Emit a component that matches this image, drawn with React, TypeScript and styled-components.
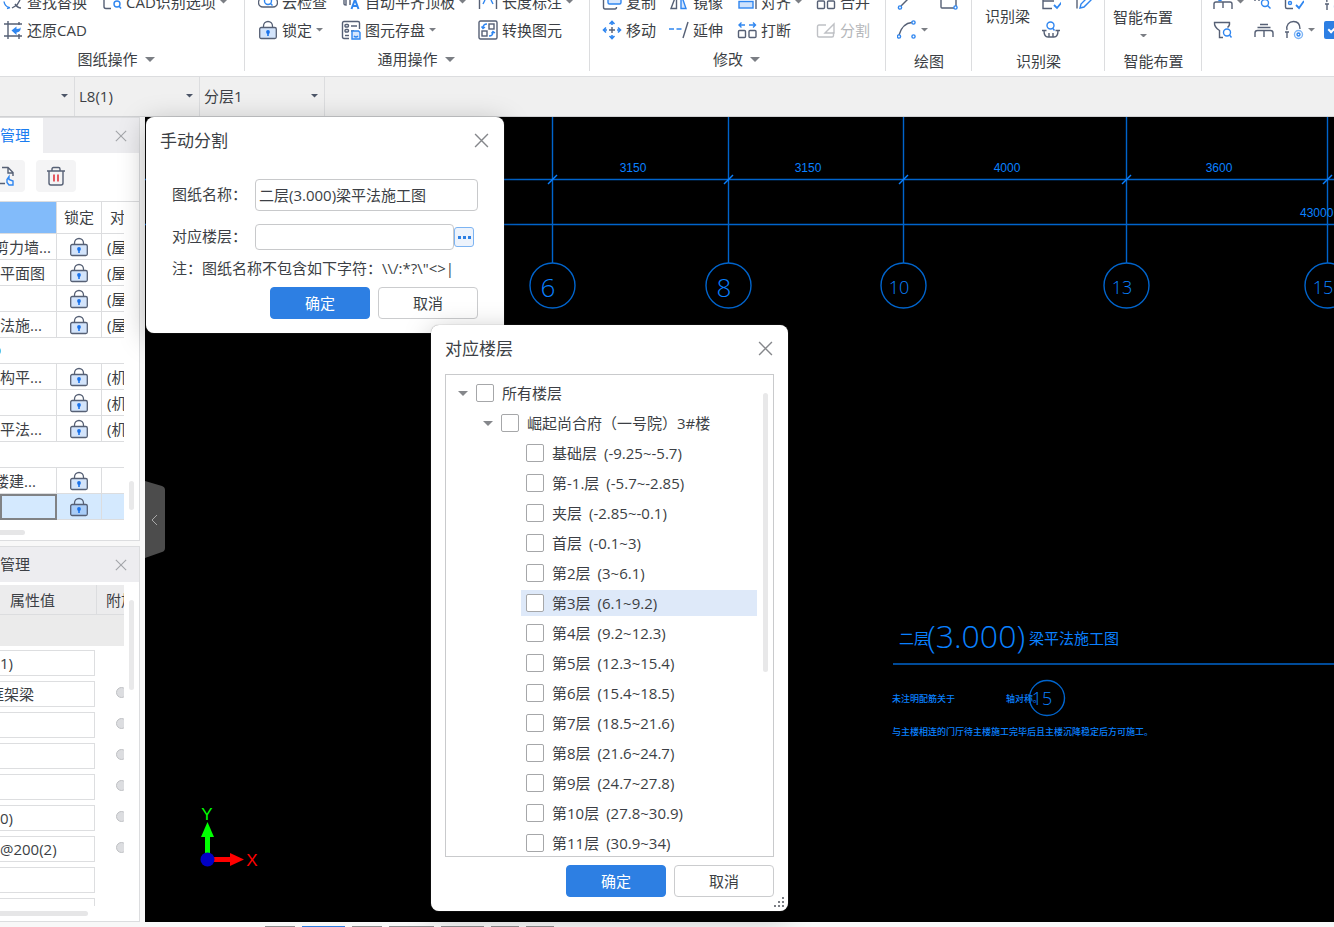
import React from 'react';
import styled, { createGlobalStyle, css } from 'styled-components';

const INK = '#3c3f45';
const SLATE = '#566075';
const BLUE = '#2d7fe3';
const LINE = '#dcdddf';
const CAD = '#0a80ff';

const GlobalStyle = createGlobalStyle`
  *, *::before, *::after { box-sizing: border-box; }
  html, body, #root { height: 100%; }
  body {
    margin: 0;
    overflow: hidden;
    font: 15px/20px "Open Sans", "Noto Sans", "Noto Sans CJK SC", sans-serif;
    color: ${INK};
    background: #f0f0f0;
  }
  button, input, select { font: inherit; color: inherit; margin: 0; }
  button { padding: 0; border: 0; background: none; cursor: pointer; }
  svg { display: block; flex: none; }
`;

/* ---------- shell ---------- */

const Shell = styled.div`
  display: flex;
  flex-direction: column;
  height: 100vh;
  overflow: hidden;
`;

const Workspace = styled.main`
  position: relative;
  display: flex;
  flex: 1;
  min-height: 0;
`;

const StatusBar = styled.footer`
  display: flex;
  align-items: flex-end;
  gap: 7px;
  height: 5px;
  padding-left: 265px;
  background: #f8f8f8;
`;

const StatusTab = styled.span<{ $w: number; $active?: boolean }>`
  width: ${p => p.$w}px;
  height: 1px;
  background: ${p => (p.$active ? BLUE : '#8f9092')};
`;

/* ---------- ribbon ---------- */

const Ribbon = styled.header`
  display: flex;
  flex: none;
  height: 77px;
  overflow: hidden;
  background: #fff;
  border-bottom: 1px solid ${LINE};
`;

const Group = styled.section<{ $w?: number; $bleed?: boolean }>`
  position: relative;
  display: flex;
  flex-direction: column;
  justify-content: flex-end;
  flex: ${p => (p.$w ? `0 0 ${p.$w}px` : '1')};
  height: 76px;
  white-space: nowrap;
  ${p => p.$bleed && css`margin-left: -10px; padding-left: 10px;`}
  &:not(:last-child)::after {
    content: '';
    position: absolute;
    right: 0;
    top: 0;
    width: 1px;
    height: 71px;
    background: ${LINE};
  }
`;

const GroupTitle = styled.div<{ $menu?: boolean; $bleed?: boolean }>`
  display: flex;
  flex: none;
  justify-content: center;
  align-items: center;
  gap: 7px;
  height: 32px;
  ${p => (p.$menu ? 'padding: 0 3px 2px 0;' : 'padding-top: 2px;')}
  ${p => p.$bleed && 'margin-left: -10px;'}
`;

const Commands = styled.div<{ $cols: string; $pad: number }>`
  display: grid;
  grid-template-columns: ${p => p.$cols};
  grid-auto-rows: 28px;
  padding-left: ${p => p.$pad}px;
`;

const Command = styled.button`
  display: flex;
  align-items: center;
  gap: 4px;
  &:disabled { color: #b4b6ba; }
`;

const Split = styled.div`
  display: flex;
  height: 56px;
`;

const BigCommand = styled.button`
  display: flex;
  flex-direction: column;
  align-items: center;
  justify-content: flex-end;
  gap: 7px;
  height: 56px;
  padding: 0 8px 7px;
`;

const BigLabel = styled.span`
  padding: 0 3px 11px 5px;
`;

const BlueCheck = styled.input`
  appearance: none;
  align-self: center;
  width: 18px;
  height: 18px;
  margin: 0;
  border-radius: 2px;
  background: ${BLUE};
  position: relative;
  &::after {
    content: '';
    position: absolute;
    left: 6px;
    top: 3px;
    width: 5px;
    height: 9px;
    border: solid #fff;
    border-width: 0 2px 2px 0;
    transform: rotate(45deg);
  }
`;

/* ---------- selector bar ---------- */

const SelectorBar = styled.nav`
  display: flex;
  flex: none;
  height: 40px;
  background: #f0f0f0;
  border-bottom: 1px solid #d0d1d3;
`;

const Selector = styled.div<{ $w: number }>`
  display: flex;
  align-items: center;
  width: ${p => p.$w}px;
  padding: 0 6px 1px 4px;
  border-right: 1px solid ${LINE};
  select {
    flex: 1;
    min-width: 0;
    appearance: none;
    padding: 0;
    border: 0;
    background: none;
    outline: none;
  }
`;

/* ---------- side panels ---------- */

const Side = styled.aside`
  display: flex;
  flex: none;
  flex-direction: column;
  gap: 5px;
  width: 145px;
  background: #f8f8f8;
`;

const Panel = styled.section<{ $h?: number }>`
  display: flex;
  flex-direction: column;
  flex: ${p => (p.$h ? `0 0 ${p.$h}px` : '1')};
  min-height: 0;
  width: 140px;
  overflow: hidden;
  background: #fff;
  border: solid ${LINE};
  border-width: 1px 1px 1px 0;
`;

const PanelHead = styled.div`
  display: flex;
  flex: none;
  align-items: center;
  justify-content: space-between;
  height: 35px;
  padding-right: 12px;
  background: #ededf0;
`;

const PanelTab = styled.span<{ $active?: boolean }>`
  width: 43px;
  line-height: 35px;
  ${p => p.$active && css`background: #fff; color: #1a7cf0;`}
`;

const PanelTools = styled.div`
  display: flex;
  gap: 11px;
  flex: none;
  height: 49px;
  padding-top: 7px;
  margin-left: -15px;
  border-bottom: 1px solid ${LINE};
`;

const ToolButton = styled.button`
  display: grid;
  place-items: center;
  width: 40px;
  height: 32px;
  border-radius: 4px;
  background: #f4f4f5;
`;

const PanelBody = styled.div`
  display: flex;
  flex: 1;
  min-height: 0;
`;

const Clip = styled.div`
  width: 124px;
  overflow: hidden;
`;

const VTrack = styled.div<{ $top: number; $h: number }>`
  flex: 1;
  padding: ${p => p.$top}px 0 0 5px;
  &::before {
    content: '';
    display: block;
    width: 5px;
    height: ${p => p.$h}px;
    border-radius: 3px;
    background: #e9e9ea;
  }
`;

const HTrack = styled.div<{ $w: number; $h: number }>`
  display: flex;
  align-items: center;
  flex: none;
  height: ${p => p.$h}px;
  &::before {
    content: '';
    width: ${p => p.$w}px;
    height: 5px;
    border-radius: 0 3px 3px 0;
    background: #e6e6e7;
  }
`;

const DrawingTable = styled.table`
  width: 160px;
  table-layout: fixed;
  border-collapse: separate;
  border-spacing: 0;
  th, td {
    height: 26px;
    padding: 0;
    overflow: hidden;
    font-weight: 400;
    text-align: left;
    white-space: nowrap;
    line-height: 20px;
    border: solid ${LINE};
    border-width: 0 1px 1px 0;
  }
  th { height: 32px; padding-bottom: 2px; text-align: center; }
  th:first-child { background: #82bbfa; }
  th:last-child { text-align: left; padding-left: 8px; }
  td:nth-child(2) svg { margin: 0 auto; }
  td:nth-child(3) { padding-left: 5px; }
`;

const DrawingRow = styled.tr<{ $selected?: boolean }>`
  ${p => p.$selected && css`
    td { background: #d4e9fe; }
    td:first-child { border: 2px solid #808285; }
  `}
`;

const NameCell = styled.td<{ $scrolled?: boolean }>`
  text-indent: ${p => (p.$scrolled ? -6 : 0)}px;
`;

const PropTable = styled.table`
  width: 160px;
  margin-top: 3px;
  table-layout: fixed;
  border-spacing: 0;
  th, td { padding: 0; font-weight: 400; text-align: left; }
  th {
    height: 30px;
    background: #ececed;
    border-bottom: 1px solid ${LINE};
    white-space: nowrap;
  }
  th:first-child { padding-left: 10px; border-right: 1px solid ${LINE}; }
  th:last-child { padding-left: 9px; }
  td { height: 31px; }
`;

const PropGroupRow = styled.tr`
  td { height: 31px; background: #ebebeb; }
`;

const PropInput = styled.input<{ $shift?: boolean }>`
  display: block;
  width: 95px;
  height: 26px;
  margin-top: 2px !important;
  padding: 0;
  border: 1px solid #dddee0;
  border-left: 0;
  outline: none;
  text-indent: ${p => (p.$shift ? -11 : 0)}px;
`;

const Dot = styled.input`
  appearance: none;
  display: block;
  width: 11px;
  height: 11px;
  margin-left: 19px !important;
  border: 1px solid #bfc1c4;
  border-radius: 50%;
  background: #dcdde0;
`;

/* ---------- drawing area ---------- */

const Stage = styled.section`
  position: relative;
  flex: 1;
  min-width: 0;
  background: #000;
`;

const Drawing = styled.svg`
  width: 100%;
  height: 100%;
  .dim { font: 12px "Liberation Sans", sans-serif; }
  .axis { font: 300 26px "Open Sans", sans-serif; }
  .axis2 { font: 300 18px "Open Sans", sans-serif; }
  .head { font: 400 15px "Noto Sans CJK SC", sans-serif; }
  .level { font: 300 32px "Open Sans", sans-serif; }
  .note { font: 500 9px "Noto Sans CJK SC", sans-serif; }
  .ucs { font: 17px "Liberation Sans", sans-serif; }
`;

const Collapse = styled.button`
  position: absolute;
  left: 0;
  top: 364px;
`;

/* ---------- dialogs ---------- */

const Dialog = styled.section<{ $x: number; $y: number; $w: number }>`
  position: absolute;
  left: ${p => p.$x}px;
  top: ${p => p.$y}px;
  width: ${p => p.$w}px;
  padding: 0 14px 14px;
  border-radius: 8px;
  background: #fff;
  box-shadow: 0 0 1px #777, 0 6px 28px rgba(0, 0, 0, 0.26);
`;

const DialogHead = styled.div`
  display: flex;
  align-items: center;
  justify-content: space-between;
  height: 47px;
  margin-bottom: 2px;
  padding-right: 1px;
  h2 { margin: 0; font-size: 17px; font-weight: 400; line-height: 24px; }
`;

const Form = styled.form`
  display: flex;
  flex-direction: column;
  padding: 13px 12px 0;
`;

const Field = styled.div<{ $gap?: boolean }>`
  display: flex;
  align-items: center;
  margin-bottom: ${p => (p.$gap ? 13 : 8)}px;
  label { flex: 0 0 83px; padding-bottom: 2px; }
`;

const TextBox = styled.input<{ $h: number }>`
  flex: 1;
  min-width: 0;
  height: ${p => p.$h}px;
  padding: 0 3px 1px;
  border: 1px solid #c8c9cb;
  border-radius: 4px;
  outline: none;
`;

const MoreButton = styled.button`
  display: grid;
  place-items: center;
  width: 20px;
  height: 20px;
  margin-right: 4px;
  border: 1px solid #7db4f2;
  border-radius: 3px;
  background: #edf3fc;
`;

const Note = styled.p`
  margin: 0 0 8px;
  line-height: 21px;
  white-space: nowrap;
`;

const Actions = styled.div`
  display: flex;
  justify-content: flex-end;
  gap: 8px;
`;

const Action = styled.button<{ $primary?: boolean }>`
  width: 100px;
  height: 32px;
  border-radius: 4px;
  border: 1px solid ${p => (p.$primary ? BLUE : '#cbccce')};
  background: ${p => (p.$primary ? BLUE : '#fff')};
  color: ${p => (p.$primary ? '#fff' : INK)};
`;

const Tree = styled.div`
  display: flex;
  height: 483px;
  margin-bottom: 8px;
  border: 1px solid #c9cacc;
  overflow: hidden;
`;

const TreeList = styled.ul`
  flex: 1;
  margin: 0;
  padding: 3px 0 0;
  list-style: none;
`;

const TreeRow = styled.li<{ $level: number }>`
  display: flex;
  align-items: center;
  height: 30px;
  padding-left: ${p => p.$level * 25}px;
`;

const Twisty = styled.button`
  display: flex;
  justify-content: flex-end;
  width: 25px;
  padding-right: 3px;
`;

const TreeLabel = styled.label<{ $hot?: boolean }>`
  display: flex;
  flex: 1;
  align-items: center;
  height: 26px;
  padding-left: 5px;
  white-space: nowrap;
  background: ${p => (p.$hot ? '#dee9f9' : 'transparent')};
`;

const Range = styled.span`
  margin-left: 7px;
`;

const Check = styled.input`
  appearance: none;
  flex: none;
  width: 18px;
  height: 18px;
  margin-right: 8px !important;
  border: 1px solid #a6a7a9;
  border-radius: 2px;
  background: #fff;
`;

const TreeTrack = styled.div`
  width: 16px;
  padding: 18px 0 0 6px;
  &::before {
    content: '';
    display: block;
    width: 5px;
    height: 279px;
    border-radius: 3px;
    background: #e8e8e9;
  }
`;

const Grip = styled.svg`
  position: absolute;
  right: 3px;
  bottom: 3px;
`;

/* ---------- icons ---------- */

const Caret = ({ size = 8, color = '#7b7e84' }: { size?: number; color?: string }) => (
  <svg width={size} height={size / 2} viewBox="0 0 8 4" aria-hidden="true">
    <path d="M0 0h8L4 4z" fill={color} />
  </svg>
);

const Close = ({ size, color }: { size: number; color: string }) => (
  <svg width={size} height={size} viewBox="0 0 14 14" stroke={color} strokeWidth="1.3" aria-hidden="true">
    <path d="M1 1l12 12M13 1L1 13" />
  </svg>
);

const Lock = ({ tone = '#d3e4fb' }: { tone?: string }) => (
  <svg width="20" height="20" viewBox="0 0 20 20" fill="none" stroke={SLATE} strokeWidth="1.3" aria-hidden="true">
    <path d="M5.500 7.500V6a4.500 4.500 0 0 1 9 0v1.500" />
    <rect x="1.700" y="7.500" width="16.600" height="11" rx="1.500" fill={tone} />
    <circle cx="10" cy="12" r="1.900" fill="#1a72ea" stroke="none" />
    <path d="M10 12v4" stroke="#1a72ea" strokeWidth="1.600" />
  </svg>
);

const B = '#2f86f0';

const glyphs: Record<string, React.ReactNode> = {
  findReplace: (
    <>
      <path d="M1 9.500c.5 3 2 5 5 6M4 16.500l3-1" stroke={B} />
      <path d="M17 8l-3 5-5 3M12 12c2 3 4 4 6 4" />
    </>
  ),
  restore: (
    <>
      <path d="M5 1v18M1 4h18M1 16h18M16 2v3M16 14v5" />
      <path d="M8.500 10.500l5-4v2.500c3 0 4-1 4-2 .5 4-1 5-4 5.500V15z" fill={B} stroke="none" />
    </>
  ),
  cadOption: (
    <>
      <path d="M2 2v12.500q0 2 2 2h5" />
      <circle cx="15" cy="12" r="3" stroke={B} />
      <path d="M17 14l2 2.500" stroke={B} />
    </>
  ),
  cloud: (
    <>
      <path d="M5 15a4.500 4.500 0 0 1 0-9M15 6a4.500 4.500 0 0 1 0 9H5" />
      <circle cx="10" cy="9" r="3.500" stroke={B} />
      <path d="M12.500 11.500l2 2" stroke={B} />
    </>
  ),
  align: (
    <>
      <path d="M3 4v8q0 1 2 1V4M9 4v9" />
      <path d="M10.500 17L14 7.500l3.500 9.500M12 14h4" stroke={B} strokeWidth="2" />
    </>
  ),
  dimension: (
    <>
      <path d="M1.500 4v13M18.500 4v13" />
      <path d="M5 12l2-4M15 12l-2-4" stroke={B} />
    </>
  ),
  store: (
    <>
      <path d="M8 18.500H3q-1.500 0-1.500-1.500V3Q1.500 1.500 3 1.500h14Q18.500 1.500 18.500 3v6M10 6h6M10 11h3" />
      <rect x="4" y="4.500" width="3.500" height="2.500" rx="1" />
      <rect x="4" y="9.500" width="3.500" height="2.500" rx="1" />
      <path d="M4 15.500h4" />
      <path d="M11 11h6.500l1.500 1.500V19h-8z" stroke={B} fill="#d7e7fd" />
      <path d="M13 16q2 2 4 0" stroke={B} />
    </>
  ),
  convert: (
    <>
      <rect x="1" y="1" width="18" height="18" rx="1.500" />
      <rect x="11" y="4" width="5" height="5" />
      <rect x="4" y="11" width="5" height="5" />
      <path d="M9 4q-4 0-4 4M3.500 6.500L5 8.500l2-1.500M11 16q4 0 4-4M13.500 13.500L15 11.500l2 1.500" stroke={B} />
    </>
  ),
  copy: (
    <>
      <path d="M5 6H3q-1.500 0-1.500 1.500V15q0 2 1.500 2h10q1.500 0 1.500-2" />
      <rect x="6" y="2" width="13" height="10" rx="1.500" stroke={B} fill="#d7e7fd" />
    </>
  ),
  move: (
    <>
      <path d="M10 7v6M7 10h6" />
      <path d="M10 1.500v3.500M10 15v3.500M1.500 10H5M15 10h3.500M7.500 4L10 1.500 12.500 4M7.500 16l2.500 2.500 2.500-2.500M4 7.500L1.500 10 4 12.500M16 7.500l2.500 2.500-2.500 2.500" stroke={B} strokeWidth="1.600" />
    </>
  ),
  mirror: (
    <>
      <path d="M7.500 2v14.500H2z" />
      <path d="M12 2v14.500h5z" stroke={B} fill="#d7e7fd" />
    </>
  ),
  extend: (
    <>
      <path d="M0 9h5M7.500 9h5" stroke={B} />
      <path d="M19 2l-5 16" />
    </>
  ),
  alignTo: (
    <>
      <rect x="2" y="9.500" width="14" height="6.500" stroke={B} fill="#cfe2fc" />
      <path d="M19 1v16M2 5h12" />
    </>
  ),
  breakApart: (
    <>
      <rect x="1.500" y="10.500" width="7" height="7" rx="1" />
      <rect x="12" y="10.500" width="7" height="7" rx="1" />
      <path d="M8 5H2M4.500 2.500L2 5l2.500 2.500M12 5h6.500M16 2.500L18.500 5 16 7.500" stroke={B} />
    </>
  ),
  merge: (
    <>
      <rect x="1.500" y="9" width="7" height="7.500" rx="1" />
      <rect x="11.500" y="9" width="7" height="7.500" rx="1" />
      <path d="M1.500 5h17" />
    </>
  ),
  cut: (
    <g stroke="#bfc1c5">
      <path d="M10 5H3Q1.500 5 1.500 6.500v9Q1.500 17 3 17h13q1.500 0 1.500-1.500V12" />
      <path d="M9 13l9-9v9zM9 13h4" />
    </g>
  ),
  line: (
    <>
      <path d="M4 14L18 0" />
      <circle cx="3" cy="15.500" r="1.600" stroke={B} fill="#fff" />
    </>
  ),
  rect: (
    <>
      <path d="M2 2v13q0 1 1 1h12M17 2v12" />
      <circle cx="16.500" cy="15.500" r="1.600" stroke={B} fill="#fff" />
    </>
  ),
  arc: (
    <>
      <path d="M2 15C4 8 8 3 15 2.500" />
      <g stroke={B} fill="#fff">
        <circle cx="2" cy="16.500" r="1.600" />
        <circle cx="16.500" cy="2.500" r="1.600" />
        <circle cx="16.500" cy="16.500" r="1.600" />
      </g>
    </>
  ),
  listCheck: (
    <>
      <path d="M2 3v13.500h9M2 9h11" />
      <path d="M13 13l3 3 5-6" stroke={B} strokeWidth="1.800" />
    </>
  ),
  edit: (
    <>
      <path d="M3 3v13.500" />
      <path d="M6 16l1-4 9-9 3 3-9 9z" stroke={B} />
    </>
  ),
  beamSearch: (
    <>
      <path d="M1 10.500h4.500M14.500 10.500H19M3 10.500c0 4 1 6.500 4 6.500h6c3 0 4-2.500 4-6.500M8 13v4M12 13v4" />
      <circle cx="9.500" cy="5.500" r="3.500" stroke={B} />
      <path d="M11.500 8l2 2.500" stroke={B} />
    </>
  ),
  support: (
    <>
      <path d="M1 17v-5q0-2 2-2h14q2 0 2 2v5M10 10v6M5 6h10" />
      <circle cx="7" cy="7" r="1.500" stroke={B} />
    </>
  ),
  quoteSearch: (
    <>
      <path d="M1 5v4M5 5v4" />
      <circle cx="11" cy="11" r="3.500" stroke={B} />
      <path d="M13.500 13.500l3 3" stroke={B} />
    </>
  ),
  pinCheck: (
    <>
      <path d="M1.500 2v13q0 1.500 1.500 1.500h6" />
      <circle cx="6" cy="11" r="1.500" stroke={B} />
      <path d="M12 13l3 3 5-7" stroke={B} strokeWidth="1.800" />
    </>
  ),
  filter: (
    <>
      <path d="M10 17.500H6.500V10.500Q1 7 1.500 2.500h15q.5 3-2 5" />
      <circle cx="14" cy="12.500" r="3.500" stroke={B} />
      <path d="M16.500 15l2 2.500" stroke={B} />
    </>
  ),
  table: <path d="M1 17v-4q0-2.500 2.500-2.500h13q2.500 0 2.500 2.500v4M10 10.500v6.500M3.500 7.500h13M6 4.500h8" />,
  hook: (
    <>
      <path d="M3 18v-6M1 12h4M3 10C2 5 5 1.500 9.500 1.500S16 4 16 9" />
      <circle cx="14.500" cy="14.500" r="4" stroke="#7db4f5" />
      <circle cx="14.500" cy="14.500" r="1.500" stroke={B} />
    </>
  ),
  trash: (
    <>
      <path d="M1 5h18M6 5V3q0-1.500 1.500-1.500h5Q14 1.500 14 3v2M3 5v12q0 2 2 2h10q2 0 2-2V5" />
      <path d="M8 8.500v7M12 8.500v7" stroke="#e0343c" strokeWidth="1.600" />
    </>
  ),
  sheet: (
    <>
      <path d="M7 1.500h6l5 5V10M13 1.500V7h5M2 17.500h8" />
      <path d="M1 3l3 3M12 13.500v3l2 2.500h4v-4l-4-1.500v-3z" stroke={B} />
    </>
  ),
};

const Icon = ({ name }: { name: string }) => (
  <svg width="20" height="20" viewBox="0 0 20 20" fill="none" stroke={SLATE} strokeWidth="1.400" aria-hidden="true">
    {glyphs[name]}
  </svg>
);

const Cmd = ({ icon, text, menu, disabled }: { icon: string; text?: string; menu?: boolean; disabled?: boolean }) => (
  <Command type="button" disabled={disabled} aria-label={text ?? icon}>
    {icon === 'lock' ? <Lock /> : <Icon name={icon} />}
    {text}
    {menu && <Caret size={7} />}
  </Command>
);

/* ---------- data ---------- */

type Sheet = { name?: string; scrolled?: boolean; note?: string; group?: boolean; selected?: boolean; dot?: boolean };

const sheets: Sheet[] = [
  { name: '剪力墙...', scrolled: true, note: '(屋' },
  { name: '平面图', note: '(屋' },
  { note: '(屋' },
  { name: '法施...', note: '(屋' },
  { group: true, dot: true },
  { name: '构平...', note: '(机' },
  { note: '(机' },
  { name: '平法...', note: '(机' },
  { group: true },
  { name: '楼建...', scrolled: true },
  { selected: true },
];

const props = [
  { value: '1)', radio: false },
  { value: '框架梁', shift: true, radio: true },
  { value: '', radio: true },
  { value: '', radio: true },
  { value: '', radio: true },
  { value: '0)', radio: true },
  { value: '@200(2)', radio: true },
  { value: '', radio: false },
  { value: '', radio: false },
];

type Floor = { name: string; range?: string; level: number; hot?: boolean };

const floors: Floor[] = [
  { name: '所有楼层', level: 0 },
  { name: '崛起尚合府（一号院）3#楼', level: 1 },
  { name: '基础层', range: '(-9.25~-5.7)', level: 2 },
  { name: '第-1.层', range: '(-5.7~-2.85)', level: 2 },
  { name: '夹层', range: '(-2.85~-0.1)', level: 2 },
  { name: '首层', range: '(-0.1~3)', level: 2 },
  { name: '第2层', range: '(3~6.1)', level: 2 },
  { name: '第3层', range: '(6.1~9.2)', level: 2, hot: true },
  { name: '第4层', range: '(9.2~12.3)', level: 2 },
  { name: '第5层', range: '(12.3~15.4)', level: 2 },
  { name: '第6层', range: '(15.4~18.5)', level: 2 },
  { name: '第7层', range: '(18.5~21.6)', level: 2 },
  { name: '第8层', range: '(21.6~24.7)', level: 2 },
  { name: '第9层', range: '(24.7~27.8)', level: 2 },
  { name: '第10层', range: '(27.8~30.9)', level: 2 },
  { name: '第11层', range: '(30.9~34)', level: 2 },
];

const axes = [
  { x: 407, label: '6', big: true },
  { x: 583, label: '8', big: true },
  { x: 758, label: '10' },
  { x: 981, label: '13' },
  { x: 1182, label: '15' },
];

const spans = [
  { x: 488, text: '3150' },
  { x: 663, text: '3150' },
  { x: 862, text: '4000' },
  { x: 1074, text: '3600' },
];

/* ---------- sections ---------- */

const TopRibbon = () => (
  <Ribbon>
    <Group $w={255} $bleed>
      <Commands $cols="99px auto" $pad={3}>
        <Cmd icon="findReplace" text="查找替换" />
        <Cmd icon="cadOption" text="CAD识别选项" menu />
        <Cmd icon="restore" text="还原CAD" />
      </Commands>
      <GroupTitle $menu $bleed>图纸操作 <Caret size={10} /></GroupTitle>
    </Group>
    <Group $w={345}>
      <Commands $cols="83px 137px auto" $pad={13}>
        <Cmd icon="cloud" text="云检查" />
        <Cmd icon="align" text="自动平齐顶板" menu />
        <Cmd icon="dimension" text="长度标注" menu />
        <Cmd icon="lock" text="锁定" menu />
        <Cmd icon="store" text="图元存盘" menu />
        <Cmd icon="convert" text="转换图元" />
      </Commands>
      <GroupTitle $menu>通用操作 <Caret size={10} /></GroupTitle>
    </Group>
    <Group $w={296}>
      <Commands $cols="67px 68px 79px auto" $pad={12}>
        <Cmd icon="copy" text="复制" />
        <Cmd icon="mirror" text="镜像" />
        <Cmd icon="alignTo" text="对齐" menu />
        <Cmd icon="merge" text="合并" />
        <Cmd icon="move" text="移动" />
        <Cmd icon="extend" text="延伸" />
        <Cmd icon="breakApart" text="打断" />
        <Cmd icon="cut" text="分割" disabled />
      </Commands>
      <GroupTitle $menu>修改 <Caret size={10} /></GroupTitle>
    </Group>
    <Group $w={86}>
      <Commands $cols="42px auto" $pad={11}>
        <Cmd icon="line" />
        <Cmd icon="rect" />
        <Cmd icon="arc" menu />
      </Commands>
      <GroupTitle>绘图</GroupTitle>
    </Group>
    <Group $w={133}>
      <Split>
        <BigCommand type="button"><BigLabel>识别梁</BigLabel></BigCommand>
        <Commands $cols="33px auto" $pad={0}>
          <Cmd icon="listCheck" />
          <Cmd icon="edit" />
          <Cmd icon="beamSearch" />
        </Commands>
      </Split>
      <GroupTitle>识别梁</GroupTitle>
    </Group>
    <Group $w={97}>
      <Split>
        <BigCommand type="button">智能布置 <Caret size={7} /></BigCommand>
      </Split>
      <GroupTitle>智能布置</GroupTitle>
    </Group>
    <Group>
      <Commands $cols="41px 30px 40px auto" $pad={11}>
        <Cmd icon="support" menu />
        <Cmd icon="quoteSearch" />
        <Cmd icon="pinCheck" />
        <Cmd icon="hook" />
        <Cmd icon="filter" />
        <Cmd icon="table" />
        <Cmd icon="hook" menu />
        <BlueCheck type="checkbox" defaultChecked aria-label="显示" />
      </Commands>
      <GroupTitle />
    </Group>
  </Ribbon>
);

const Selectors = () => (
  <SelectorBar>
    {[
      { w: 75, label: '构件', value: '' },
      { w: 125, label: '名称', value: 'L8(1)' },
      { w: 125, label: '分层', value: '分层1' },
    ].map(s => (
      <Selector key={s.label} $w={s.w}>
        <select aria-label={s.label} defaultValue={s.value}>
          <option>{s.value}</option>
        </select>
        <Caret size={7} color="#4d5668" />
      </Selector>
    ))}
  </SelectorBar>
);

const SheetPanel = () => (
  <Panel $h={424}>
    <PanelHead>
      <PanelTab $active>管理</PanelTab>
      <button type="button" aria-label="关闭"><Close size={12} color="#a3a5a9" /></button>
    </PanelHead>
    <PanelTools>
      <ToolButton type="button" aria-label="图纸"><Icon name="sheet" /></ToolButton>
      <ToolButton type="button" aria-label="删除"><Icon name="trash" /></ToolButton>
    </PanelTools>
    <PanelBody>
      <Clip>
        <DrawingTable>
          <colgroup><col style={{ width: 57 }} /><col style={{ width: 45 }} /><col /></colgroup>
          <thead>
            <tr><th /><th>锁定</th><th>对应</th></tr>
          </thead>
          <tbody>
            {sheets.map((s, i) => (
              <DrawingRow key={i} $selected={s.selected}>
                {s.group ? (
                  <td colSpan={3}>
                    {s.dot && (
                      <svg width="4" height="12" aria-hidden="true"><circle cx="-4" cy="6" r="5" fill="#49c0e8" /></svg>
                    )}
                  </td>
                ) : (
                  <>
                    <NameCell $scrolled={s.scrolled}>{s.name}</NameCell>
                    <td><Lock tone={s.selected ? '#a9cdf8' : undefined} /></td>
                    <td>{s.note}</td>
                  </>
                )}
              </DrawingRow>
            ))}
          </tbody>
        </DrawingTable>
      </Clip>
      <VTrack $top={279} $h={29} />
    </PanelBody>
    <HTrack $w={25} $h={16} />
  </Panel>
);

const PropertyPanel = () => (
  <Panel>
    <PanelHead>
      <PanelTab>管理</PanelTab>
      <button type="button" aria-label="关闭"><Close size={12} color="#a3a5a9" /></button>
    </PanelHead>
    <PanelBody>
      <Clip>
        <PropTable>
          <colgroup><col style={{ width: 97 }} /><col /></colgroup>
          <thead>
            <tr><th>属性值</th><th>附加</th></tr>
          </thead>
          <tbody>
            <PropGroupRow><td colSpan={2} /></PropGroupRow>
            {props.map((p, i) => (
              <tr key={i}>
                <td><PropInput $shift={p.shift} defaultValue={p.value} aria-label={`属性值 ${i + 1}`} /></td>
                <td>{p.radio && <Dot type="radio" name={`extra${i}`} aria-label={`附加 ${i + 1}`} />}</td>
              </tr>
            ))}
          </tbody>
        </PropTable>
      </Clip>
      <VTrack $top={18} $h={90} />
    </PanelBody>
    <HTrack $w={88} $h={15} />
  </Panel>
);

const CadView = () => (
  <Stage>
    <Drawing aria-label="梁平法施工图">
      <g stroke="#0064cc" fill="none" strokeWidth="1.400">
        <path d="M0 62.500H3000M0 107.500H3000" />
        {axes.map(a => (
          <g key={a.x}>
            <path d={`M${a.x + 0.5} 0V146`} />
            <path d={`M${a.x - 4} 67l9 -9`} stroke={CAD} />
            <circle cx={a.x + 0.5} cy="168.500" r="22.500" />
          </g>
        ))}
        <path d="M748 547H3000" />
        <circle cx="902" cy="581" r="17.500" />
      </g>
      <g fill={CAD}>
        {spans.map(s => (
          <text key={s.x} className="dim" x={s.x} y="55" textAnchor="middle">{s.text}</text>
        ))}
        <text className="dim" x="1155" y="100">43000</text>
        {axes.map(a => (
          <text key={a.x} className={a.big ? 'axis' : 'axis2'} x={a.x - 4} y={a.big ? 180 : 177} textAnchor="middle">
            {a.label}
          </text>
        ))}
        <text className="head" x="754" y="527">二层</text>
        <text className="level" x="782" y="531">(3.000)</text>
        <text className="head" x="884" y="527">梁平法施工图</text>
        <text className="note" x="747" y="585">未注明配筋关于</text>
        <text className="note" x="861" y="585">轴对称。</text>
        <text className="axis2" x="897" y="588" textAnchor="middle">15</text>
        <text className="note" x="747" y="618">与主楼相连的门厅待主楼施工完毕后且主楼沉降稳定后方可施工。</text>
      </g>
      <path d="M62.500 742V718" stroke="#0f0" strokeWidth="5" />
      <path d="M62.500 705l6.500 15h-13z" fill="#0f0" />
      <path d="M63 742.500h24" stroke="#f00" strokeWidth="5" />
      <path d="M99 742.500l-14 -6.500v13z" fill="#f00" />
      <circle cx="62.500" cy="742.500" r="7" fill="#0000c4" />
      <text className="ucs" x="62" y="703" textAnchor="middle" fill="#0f0">Y</text>
      <text className="ucs" x="107" y="749" textAnchor="middle" fill="#f00">X</text>
    </Drawing>
    <Collapse type="button" aria-label="收起">
      <svg width="20" height="78" viewBox="0 0 20 78" fill="none">
        <path d="M0 0l17 5q3 1 3 4v58q0 3-3 4L0 77z" fill="#4c4c4c" />
        <path d="M12 34l-5 5 5 5" stroke="#a8a8a8" />
      </svg>
    </Collapse>
  </Stage>
);

const SplitDialog = () => (
  <Dialog role="dialog" aria-label="手动分割" $x={146} $y={0} $w={358}>
    <DialogHead>
      <h2>手动分割</h2>
      <button type="button" aria-label="关闭"><Close size={15} color="#85878b" /></button>
    </DialogHead>
    <Form onSubmit={e => e.preventDefault()}>
      <Field $gap>
        <label htmlFor="sheet">图纸名称：</label>
        <TextBox id="sheet" $h={32} defaultValue="二层(3.000)梁平法施工图" />
      </Field>
      <Field>
        <label htmlFor="floor">对应楼层：</label>
        <TextBox id="floor" $h={26} />
        <MoreButton type="button" aria-label="选择楼层">
          <svg width="13" height="3" fill={BLUE} aria-hidden="true">
            <path d="M0 0h3v3H0zM5 0h3v3H5zM10 0h3v3h-3z" />
          </svg>
        </MoreButton>
      </Field>
      <Note>{'注：图纸名称不包含如下字符：\\\\/:*?\\"<>|'}</Note>
      <Actions>
        <Action type="submit" $primary>确定</Action>
        <Action type="button">取消</Action>
      </Actions>
    </Form>
  </Dialog>
);

const FloorDialog = () => (
  <Dialog role="dialog" aria-label="对应楼层" $x={431} $y={208} $w={357}>
    <DialogHead>
      <h2>对应楼层</h2>
      <button type="button" aria-label="关闭"><Close size={15} color="#85878b" /></button>
    </DialogHead>
    <Tree>
      <TreeList>
        {floors.map(f => (
          <TreeRow key={f.name} $level={f.level}>
            <Twisty type="button" aria-label="展开" tabIndex={f.level < 2 ? 0 : -1}>
              {f.level < 2 && <Caret size={10} color="#85878b" />}
            </Twisty>
            <TreeLabel $hot={f.hot}>
              <Check type="checkbox" />
              {f.name}
              {f.range && <Range>{f.range}</Range>}
            </TreeLabel>
          </TreeRow>
        ))}
      </TreeList>
      <TreeTrack />
    </Tree>
    <Actions>
      <Action type="button" $primary>确定</Action>
      <Action type="button">取消</Action>
    </Actions>
    <Grip width="11" height="11" fill="#7b7e84" aria-hidden="true">
      <path d="M8 0h2v2H8zM8 4h2v2H8zM4 4h2v2H4zM8 8h2v2H8zM4 8h2v2H4zM0 8h2v2H0z" />
    </Grip>
  </Dialog>
);

export default function App() {
  return (
    <Shell>
      <GlobalStyle />
      <TopRibbon />
      <Selectors />
      <Workspace>
        <Side>
          <SheetPanel />
          <PropertyPanel />
        </Side>
        <CadView />
        <SplitDialog />
        <FloorDialog />
      </Workspace>
      <StatusBar>
        <StatusTab $w={30} />
        <StatusTab $w={43} $active />
        <StatusTab $w={30} />
        <StatusTab $w={45} />
        <StatusTab $w={43} />
        <StatusTab $w={28} />
        <StatusTab $w={28} />
      </StatusBar>
    </Shell>
  );
}
